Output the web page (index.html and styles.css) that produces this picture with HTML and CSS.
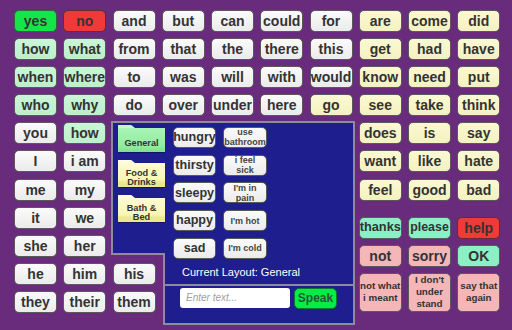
FILE: index.html
```html
<!DOCTYPE html>
<html>
<head>
<meta charset="utf-8">
<link rel="stylesheet" href="styles.css">
</head>
<body>
<div class="board">
  <div class="key lime">yes</div><div class="key red">no</div><div class="key">and</div><div class="key">but</div><div class="key">can</div><div class="key">could</div><div class="key">for</div><div class="key yel">are</div><div class="key yel">come</div><div class="key yel">did</div>
  <div class="key mint">how</div><div class="key mint">what</div><div class="key">from</div><div class="key">that</div><div class="key">the</div><div class="key">there</div><div class="key">this</div><div class="key yel">get</div><div class="key yel">had</div><div class="key yel">have</div>
  <div class="key mint">when</div><div class="key mint">where</div><div class="key">to</div><div class="key">was</div><div class="key">will</div><div class="key">with</div><div class="key">would</div><div class="key yel">know</div><div class="key yel">need</div><div class="key yel">put</div>
  <div class="key mint">who</div><div class="key mint">why</div><div class="key">do</div><div class="key">over</div><div class="key">under</div><div class="key">here</div><div class="key yel">go</div><div class="key yel">see</div><div class="key yel">take</div><div class="key yel">think</div>
  <div class="key">you</div><div class="key mint">how</div><div class="key yel">does</div><div class="key yel">is</div><div class="key yel">say</div>
  <div class="key">I</div><div class="key">i am</div><div class="key yel">want</div><div class="key yel">like</div><div class="key yel">hate</div>
  <div class="key">me</div><div class="key">my</div><div class="key yel">feel</div><div class="key yel">good</div><div class="key yel">bad</div>
  <div class="key">it</div><div class="key">we</div>
  <div class="key">she</div><div class="key">her</div>
  <div class="key">he</div><div class="key">him</div>
  <div class="key">they</div><div class="key">their</div>
  <div class="key lift row-he">his</div>
  <div class="key lift row-they">them</div>

  <div class="panel">
    <div class="notch"></div>
    <div class="ptop">
      <div class="folders">
        <div class="folder green">General</div>
        <div class="folder">Food &amp;<br>Drinks</div>
        <div class="folder">Bath &amp;<br>Bed</div>
      </div>
      <div class="pcol words">
        <div class="key pk">hungry</div>
        <div class="key pk">thirsty</div>
        <div class="key pk">sleepy</div>
        <div class="key pk">happy</div>
        <div class="key pk">sad</div>
      </div>
      <div class="pcol phrases">
        <div class="key pk small">use<br>bathroom</div>
        <div class="key pk small">i feel<br>sick</div>
        <div class="key pk small">I'm in<br>pain</div>
        <div class="key pk small">I'm hot</div>
        <div class="key pk small">I'm cold</div>
      </div>
    </div>
    <div class="status">Current Layout: General</div>
    <div class="entry">
      <input class="field" type="text" placeholder="Enter text...">
      <div class="speak">Speak</div>
    </div>
  </div>

  <div class="side">
    <div class="key aqua fit13">thanks</div><div class="key aqua fit12">please</div><div class="key red">help</div>
    <div class="key pink">not</div><div class="key pink">sorry</div><div class="key aqua">OK</div>
    <div class="key pink multi">not what<br>i meant</div><div class="key pink multi">I don't<br>under<br>stand</div><div class="key pink multi">say that<br>again</div>
  </div>
</div>
</body>
</html>
```

FILE: styles.css
```css
html, body {
  margin: 0;
  padding: 0;
}
body {
  width: 512px;
  height: 330px;
  overflow: hidden;
  background: #692c7c;
  font-family: "Liberation Sans", Arial, sans-serif;
}
.board {
  display: grid;
  grid-template-columns: repeat(10, 43px);
  grid-template-rows: repeat(11, 22px);
  column-gap: 6.25px;
  row-gap: 6.1px;
  padding: 10px 0 0 14px;
}
.key {
  box-sizing: border-box;
  display: flex;
  align-items: center;
  justify-content: center;
  border: 1px solid #5a5a5a;
  border-radius: 5px;
  background: linear-gradient(#fbfbfb, #ebebeb);
  color: #333;
  font-weight: bold;
  font-size: 14px;
  line-height: 1;
  text-align: center;
  white-space: nowrap;
}
.lime { background: #14e64a; border-color: #2c6a36; }
.red { background: #ef3a3a; border-color: #6a2a2a; }
.mint { background: linear-gradient(#cbf5d8, #bcefcc); }
.yel { background: linear-gradient(#fbf9d2, #f4f1c0); }
.aqua { background: #8cf0c6; }
.pink { background: #f4b6b6; }
.fit13 { font-size: 12.8px; }
.fit12 { font-size: 12.4px; }
.multi { font-size: 9.8px; line-height: 12px; }

.lift { position: relative; z-index: 2; grid-column: 3; }
.row-he { grid-row: 10; }
.row-they { grid-row: 11; }

.panel {
  grid-column: 3 / 8;
  grid-row: 5 / 12;
  margin: -1.4px -2.5px -12px -1.5px;
  position: relative;
  z-index: 1;
  background: #1e1e8e;
  border: 2px solid #8c8c9a;
  display: flex;
  flex-direction: column;
}
.notch {
  position: absolute;
  left: -2px;
  bottom: -2px;
  width: 54px;
  height: 72px;
  box-sizing: border-box;
  background: #692c7c;
  border-top: 2px solid #8c8c9a;
  border-right: 2px solid #8c8c9a;
}
.ptop {
  display: flex;
  padding: 2px 0 0 5px;
}
.folders {
  display: flex;
  flex-direction: column;
  gap: 7px;
  width: 47px;
}
.folder {
  position: relative;
  box-sizing: border-box;
  margin-top: 3px;
  height: 25px;
  padding-top: 7px;
  display: flex;
  align-items: center;
  justify-content: center;
  text-align: center;
  font-size: 9.2px;
  line-height: 9px;
  font-weight: bold;
  color: #333;
  background: linear-gradient(#fdfbd2 0%, #f9f5b4 70%, #ece78e 82%, #ece78e 100%);
  border-bottom: 1px solid #14146a;
}
.folder::before {
  content: "";
  position: absolute;
  left: 0;
  top: -3px;
  width: 17px;
  height: 3px;
  background: #fdfbe0;
  clip-path: polygon(0 0, 78% 0, 100% 100%, 0 100%);
}
.folder.green {
  background: linear-gradient(#a9f4b6 0%, #92ec9f 75%, #7fdf8e 100%);
}
.folder.green::before { background: #c2f8cc; }

.pcol {
  display: flex;
  flex-direction: column;
  gap: 6.75px;
  margin-top: 2px;
}
.words { margin-left: 8px; }
.phrases { margin-left: 7px; }
.pk {
  width: 43px;
  height: 21px;
  font-size: 12.6px;
}
.phrases .pk { width: 44px; }
.pk.small {
  font-size: 9px;
  line-height: 10px;
  color: #444;
}

.status {
  margin: 7px 0 0 69px;
  color: #fff;
  font-size: 11px;
  line-height: 13px;
}
.entry {
  flex: 1;
  margin: 5px 0 0 50px;
  border-top: 2px solid #8c8c9a;
  display: flex;
  align-items: flex-start;
  gap: 4px;
  padding: 2px 0 0 17px;
}
.field {
  box-sizing: border-box;
  width: 110px;
  height: 20px;
  margin: 0;
  border: none;
  border-radius: 3px;
  background: #fff;
  padding: 0 6px;
  font-family: "Liberation Sans", Arial, sans-serif;
  font-size: 10px;
  font-style: italic;
}
.field::placeholder { color: #a0a0a0; }
.speak {
  box-sizing: border-box;
  width: 43px;
  height: 21px;
  display: flex;
  align-items: center;
  justify-content: center;
  background: #06ec46;
  border: 1px solid #0b7a2c;
  border-radius: 5px;
  color: #1f5a30;
  font-weight: bold;
  font-size: 12px;
}

.side {
  grid-column: 8 / 11;
  grid-row: 8 / 12;
  display: grid;
  grid-template-columns: repeat(3, 43px);
  grid-template-rows: 22px 22px 39px;
  column-gap: 6.25px;
  row-gap: 6px;
  padding-top: 10px;
}
```
